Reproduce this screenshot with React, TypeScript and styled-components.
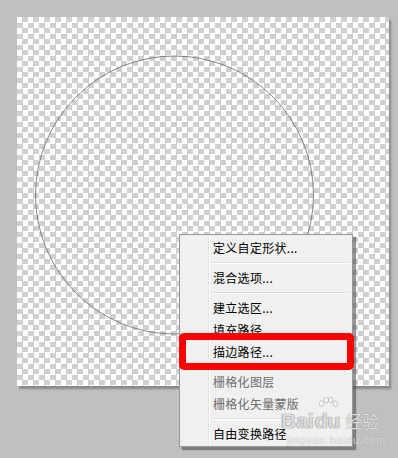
import React from "react";
import styled, { createGlobalStyle } from "styled-components";

type MenuEntry =
  | { kind: "item"; label: string; disabled?: boolean }
  | { kind: "sep" };

const menu: MenuEntry[] = [
  { kind: "item", label: "定义自定形状..." },
  { kind: "sep" },
  { kind: "item", label: "混合选项..." },
  { kind: "sep" },
  { kind: "item", label: "建立选区..." },
  { kind: "item", label: "填充路径..." },
  { kind: "item", label: "描边路径..." },
  { kind: "sep" },
  { kind: "item", label: "栅格化图层", disabled: true },
  { kind: "item", label: "栅格化矢量蒙版", disabled: true },
  { kind: "sep" },
  { kind: "item", label: "自由变换路径" },
];

const GlobalStyle = createGlobalStyle`
  html, body {
    margin: 0;
    padding: 0;
    background: #c0c0c0;
  }
  body {
    font-family: "Noto Sans CJK SC", "Liberation Sans", sans-serif;
  }
`;

export default function App() {
  return (
    <>
      <GlobalStyle />
      <Workspace>
        <Canvas>
          <PathDrawing viewBox="0 0 372 369" width="372" height="369">
            <circle
              cx="157.5"
              cy="178"
              r="139"
              fill="none"
              stroke="#6a6a6a"
              strokeWidth="0.8"
            />
          </PathDrawing>
        </Canvas>

        <ContextMenu>
          <Gutter />
          {menu.map((entry, i) =>
            entry.kind === "sep" ? (
              <Separator key={i} />
            ) : (
              <MenuItem key={i} $disabled={entry.disabled}>
                {entry.label}
              </MenuItem>
            ),
          )}
        </ContextMenu>

        <Highlight />

        <Watermark>
          <BrandRow>
            <BrandText>Bai</BrandText>
            <PawWrap>
              <Paw viewBox="0 0 24 16" width="22" height="15">
                <ellipse cx="5" cy="7" rx="2.4" ry="3" />
                <ellipse cx="10" cy="3.2" rx="2.4" ry="3" />
                <ellipse cx="15" cy="3.2" rx="2.4" ry="3" />
                <ellipse cx="20" cy="7" rx="2.4" ry="3" />
              </Paw>
              <BrandText>du</BrandText>
            </PawWrap>
            <BrandCn>经验</BrandCn>
          </BrandRow>
          <BrandUrl>jingyan.baidu.com</BrandUrl>
        </Watermark>
      </Workspace>
    </>
  );
}

const Workspace = styled.div`
  position: relative;
  width: 398px;
  height: 458px;
  padding: 17px 0 0 17px;
  box-sizing: border-box;
  background: #c0c0c0;
  overflow: hidden;
`;

const Canvas = styled.div`
  position: relative;
  width: 372px;
  height: 369px;
  background: repeating-conic-gradient(#d0d0d0 0% 25%, #ffffff 0% 50%) 0 0 /
    11px 11px;
  box-shadow: 2px 3px 2px rgba(90, 90, 90, 0.55);
`;

const PathDrawing = styled.svg`
  display: block;
`;

const ContextMenu = styled.div`
  position: absolute;
  left: 179px;
  top: 234px;
  width: 174px;
  box-sizing: border-box;
  padding: 2px 2px 1px 2px;
  background: #f0f0f0;
  border: 1px solid #979797;
  box-shadow: 3px 3px 1px rgba(70, 70, 70, 0.55);
  display: flex;
  flex-direction: column;
`;

const Gutter = styled.div`
  position: absolute;
  top: 2px;
  bottom: 2px;
  left: 28px;
  width: 1px;
  background: #e2e3e3;
  border-right: 1px solid #ffffff;
`;

const MenuItem = styled.div<{ $disabled?: boolean }>`
  height: 22px;
  line-height: 22px;
  padding-left: 31px;
  font-size: 12px;
  letter-spacing: 0.3px;
  color: ${(p) => (p.$disabled ? "#6d6d6d" : "#000000")};
  white-space: nowrap;
`;

const Separator = styled.div`
  height: 8px;
  margin-left: 29px;
  position: relative;
  &::after {
    content: "";
    position: absolute;
    left: 0;
    right: 0;
    top: 3px;
    height: 1px;
    background: #e0e0e0;
    border-bottom: 1px solid #ffffff;
  }
`;

const Highlight = styled.div`
  position: absolute;
  left: 179px;
  top: 333px;
  width: 175px;
  height: 37px;
  box-sizing: border-box;
  border: 7px solid #ff0000;
  border-radius: 5px;
`;

const Watermark = styled.div`
  position: absolute;
  left: 281px;
  top: 402px;
  display: flex;
  flex-direction: column;
  color: rgba(255, 255, 255, 0.75);
  pointer-events: none;
`;

const BrandRow = styled.div`
  display: flex;
  align-items: flex-end;
  gap: 1px;
  height: 30px;
`;

const BrandText = styled.span`
  font-family: "Liberation Sans", sans-serif;
  font-weight: bold;
  font-size: 21px;
  line-height: 22px;
  text-shadow: 0 0 1px rgba(110, 110, 110, 0.9),
    0 0 1px rgba(110, 110, 110, 0.9);
`;

const PawWrap = styled.span`
  display: flex;
  flex-direction: column;
  align-items: center;
`;

const Paw = styled.svg`
  fill: rgba(255, 255, 255, 0.75);
  stroke: rgba(120, 120, 120, 0.7);
  stroke-width: 0.6;
  margin-bottom: -2px;
`;

const BrandCn = styled.span`
  font-size: 17px;
  line-height: 22px;
  margin-left: 4px;
  text-shadow: 0 0 1px rgba(110, 110, 110, 0.9);
`;

const BrandUrl = styled.span`
  font-family: "Liberation Sans", sans-serif;
  font-size: 11px;
  letter-spacing: 0.6px;
  margin-left: 6px;
  margin-top: 2px;
  color: rgba(255, 255, 255, 0.6);
  text-shadow: 0 0 1px rgba(130, 130, 130, 0.6);
`;
